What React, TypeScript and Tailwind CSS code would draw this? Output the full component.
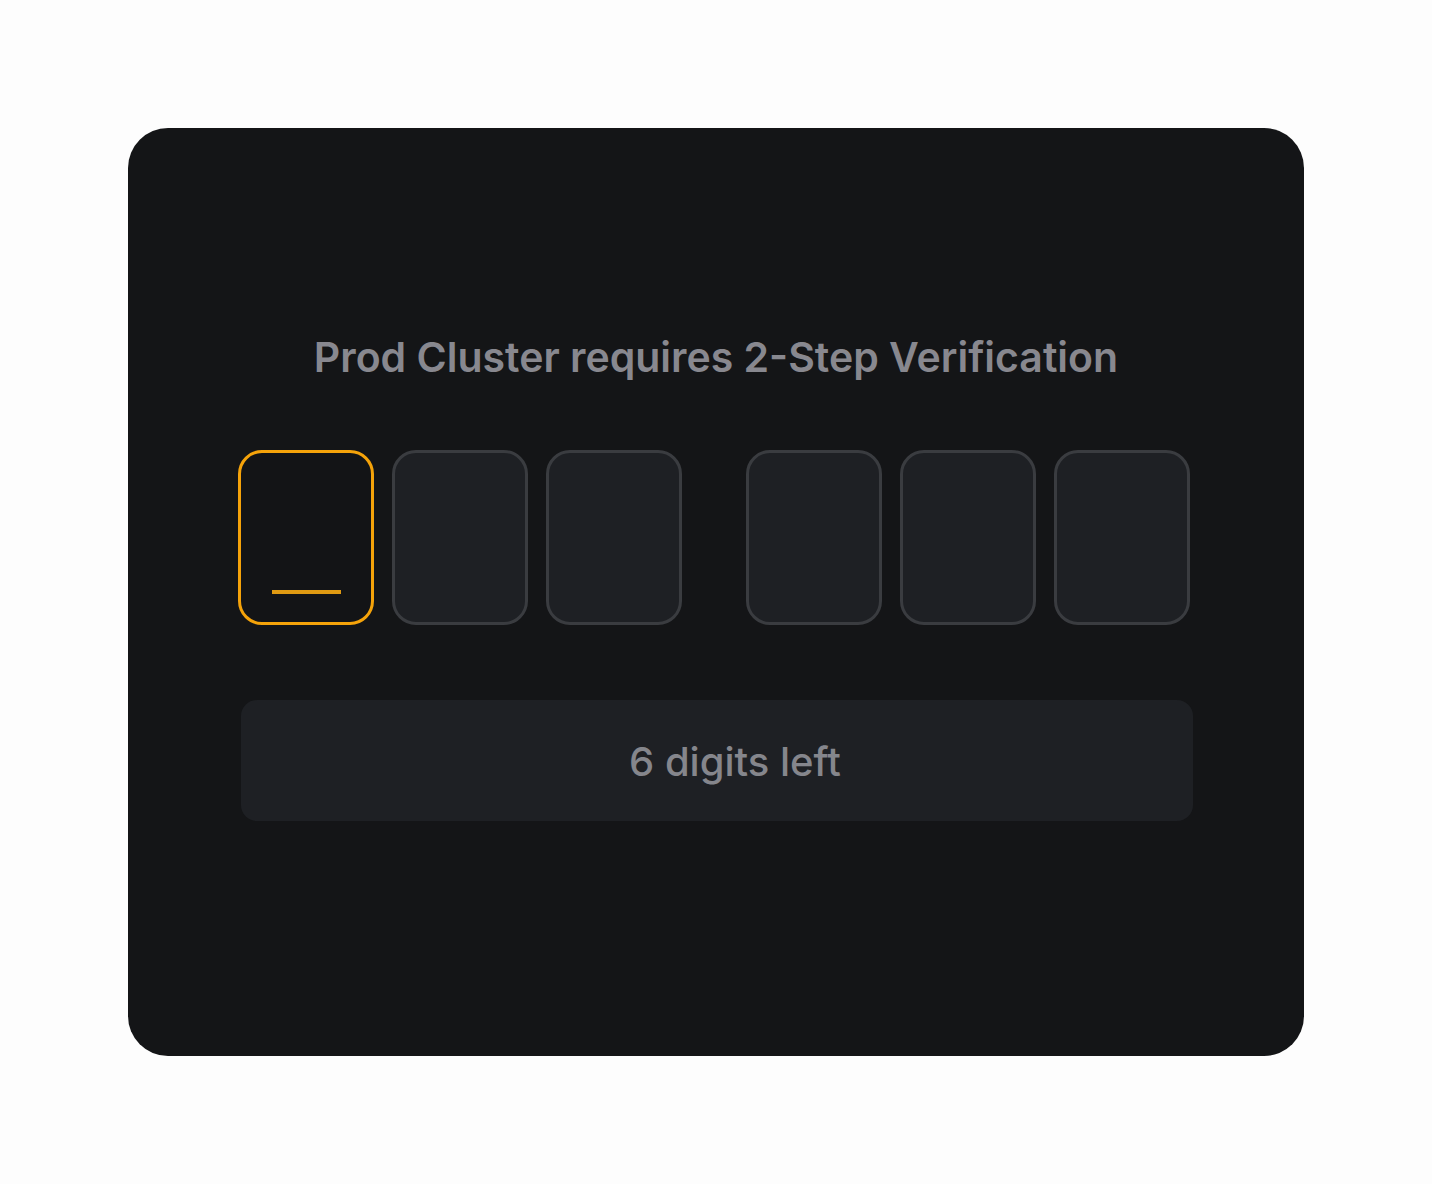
export default function App() {
  const digits = [0, 1, 2, 3, 4, 5];

  return (
    <div className="w-[1432px] h-[1184px] bg-[#fdfdfd] p-[128px]" style={{ fontFamily: "Inter, 'Noto Sans', sans-serif" }}>
      <div className="w-[1176px] h-[928px] rounded-[40px] bg-[#141517] pt-[205px] flex flex-col items-center">
        {/* Title */}
        <h1 className="text-[41px] leading-[48px] font-semibold text-[#88888f]">
          Prod Cluster requires 2-Step Verification
        </h1>

        {/* Code inputs */}
        <div className="mt-[69px] w-[952px] flex ml-[-4px]">
          {digits.map((d) => (
            <div
              key={d}
              className={`w-[136px] h-[175px] rounded-[24px] border-[3px] flex items-end justify-center pb-[28px] ${
                d === 0 ? "border-[#f5a30a] bg-[#131416]" : "border-[#3a3c40] bg-[#1e2024]"
              } ${d === 3 ? "ml-[64px]" : d > 0 ? "ml-[18px]" : ""}`}
            >
              {d === 0 && <div className="w-[69px] h-[4px] bg-[#e09a12]" />}
            </div>
          ))}
        </div>

        {/* Status bar */}
        <div className="mt-[75px] ml-[2px] w-[952px] h-[121px] rounded-[16px] bg-[#1e2024] flex items-center justify-center pl-[36px] pt-[3px]">
          <span className="text-[40px] font-medium text-[#85868c]">6 digits left</span>
        </div>
      </div>
    </div>
  );
}
